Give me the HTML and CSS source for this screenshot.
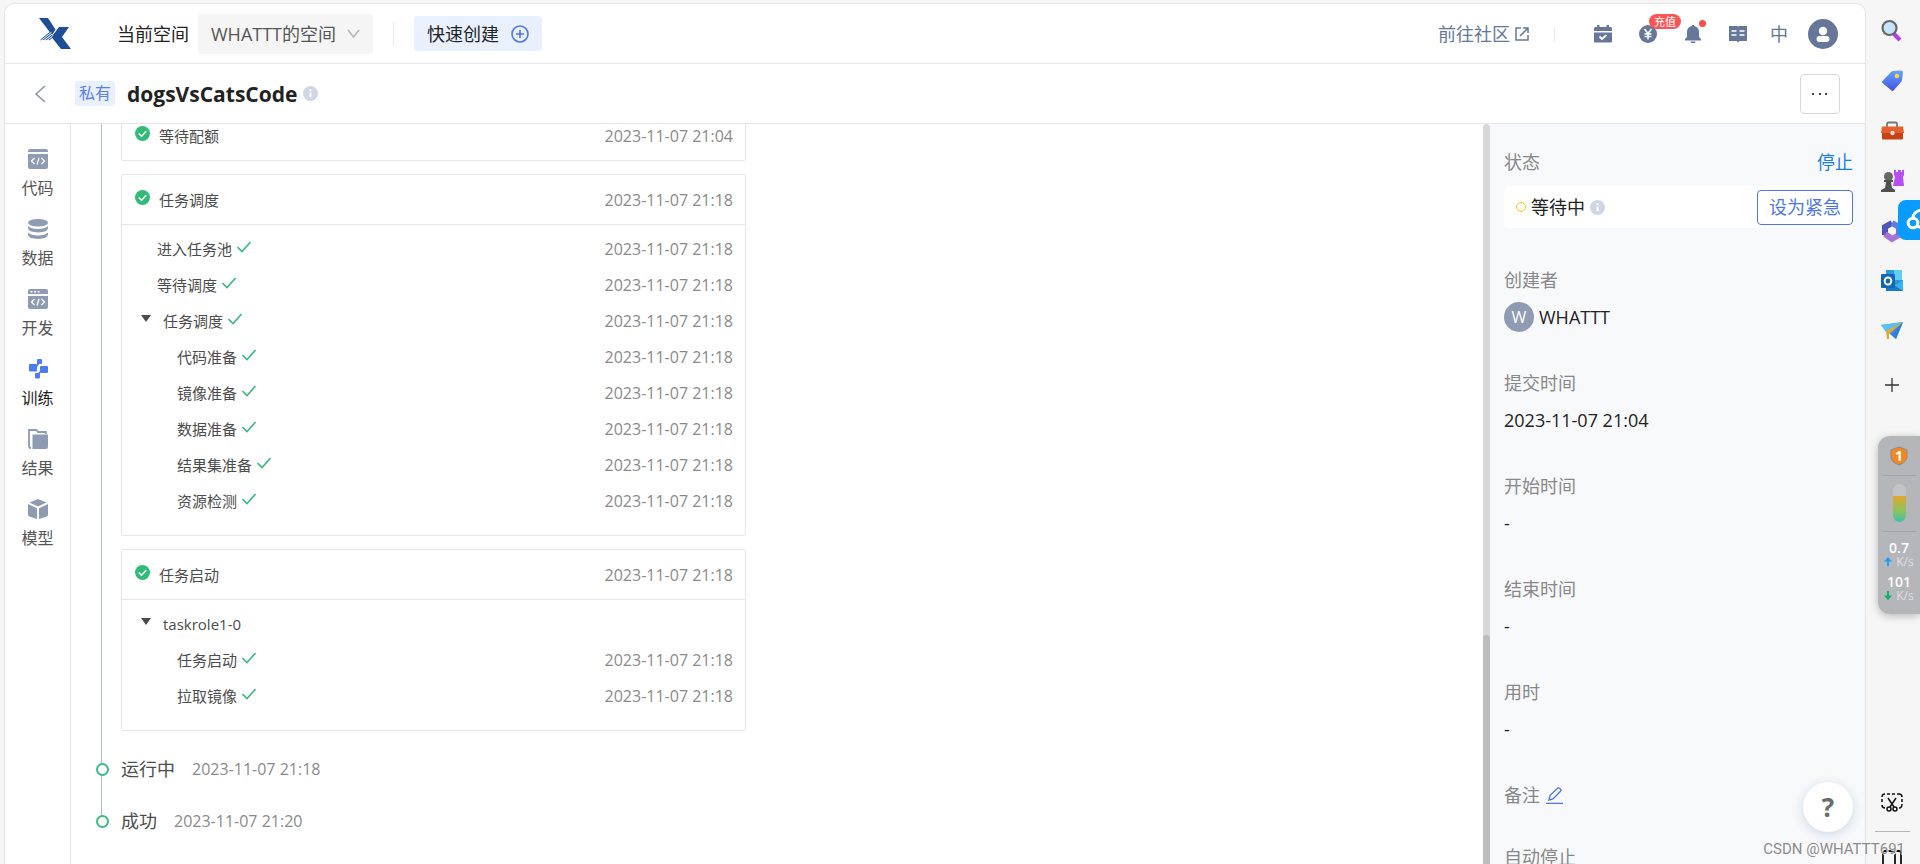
FILE: index.html
```html
<!DOCTYPE html>
<html lang="zh-CN">
<head>
    <meta charset="UTF-8">
    <meta name="viewport" content="width=device-width, initial-scale=1.0">
    <title>dogsVsCatsCode</title>
    <link rel="stylesheet" href="styles.css">
</head>
<body>
    <!-- shared icons -->
    <svg class="sprite" aria-hidden="true">
        <symbol id="i-info" viewBox="0 0 16 16">
            <circle cx="8" cy="8" r="8" fill="#d0d6e5"/>
            <path d="M7 3.5h2v2H7zM7 6.8h2V12H7z" fill="#fff"/>
        </symbol>
        <symbol id="i-done" viewBox="0 0 16 16">
            <circle cx="8" cy="8" r="8" fill="#30bb78"/>
            <path d="M4 8l3 3 5-5.5" fill="none" stroke="#fff" stroke-width="1.5"/>
        </symbol>
        <symbol id="i-check" viewBox="0 0 14 12">
            <path d="M0.500 6l4.500 4.500L13.500 1" fill="none" stroke="#3db983" stroke-width="1.600"/>
        </symbol>
        <symbol id="i-caret" viewBox="0 0 12 8">
            <path d="M1 0h10L6 7z" fill="#4c4c4c"/>
        </symbol>
    </svg>

    <div class="app">
        <header class="topbar">
            <a class="logo" href="#" aria-label="首页">
                <svg width="34" height="32" viewBox="0 0 34 32">
                    <path d="M1 0h9l7.500 11.500L14 17z" fill="#1f4e99"/>
                    <path d="M21 9h10l-7 10 9 12H23l-9.500-12z" fill="#1f4e99"/>
                    <path d="M13 13.500L3 22h9l3-4.500z" fill="#dbe5f3"/>
                    <path d="M2.500 22L13 13.500M5 22l9-7M8 22l6.500-5M11 22l4-3" stroke="#1f4e99" stroke-width="1"/>
                </svg>
            </a>
            <label class="space-label" for="space">当前空间</label>
            <div class="space-select">
                <select id="space"><option>WHATTT的空间</option></select>
                <svg width="13" height="10" viewBox="0 0 13 10"><path d="M1 1l5.500 7L12 1" fill="none" stroke="#b5b5b5" stroke-width="1.500"/></svg>
            </div>
            <span class="divider"></span>
            <button class="create">快速创建
                <svg width="18" height="18" viewBox="0 0 18 18" fill="none" stroke="#4e76e8" stroke-width="1.600"><circle cx="9" cy="9" r="8"/><path d="M9 5v8M5 9h8"/></svg>
            </button>

            <div class="tools">
                <a class="community" href="#">前往社区
                    <svg width="14" height="14" viewBox="0 0 14 14" fill="none" stroke="#66779a" stroke-width="1.500"><path d="M6 1H1v12h12V8M8 1h5v5M13 1L5 9"/></svg>
                </a>
                <span class="divider short"></span>
                <button class="tool" aria-label="日程">
                    <svg width="18" height="18" viewBox="0 0 18 18"><path d="M0 6V3.500Q0 2 1.500 2H3V0h2.500v2h7V0H15v2h1.500Q18 2 18 3.500V6zM0 7.500h18v9q0 1-1 1H1q-1 0-1-1z" fill="#66779a"/><path d="M5.500 11.500l2.500 2.500 4.500-4" fill="none" stroke="#fff" stroke-width="1.800"/></svg>
                </button>
                <button class="tool" aria-label="充值">
                    <svg width="18" height="18" viewBox="0 0 18 18"><circle cx="9" cy="9" r="9" fill="#66779a"/><path d="M5.500 4L9 8.500 12.500 4M9 8v6.500M5.500 9h7M5.500 11.500h7" fill="none" stroke="#fff" stroke-width="1.500"/></svg>
                    <span class="badge">充值</span>
                </button>
                <button class="tool" aria-label="通知">
                    <svg width="18" height="18" viewBox="0 0 18 18"><path d="M8 0h2v1q5 1 5 6v5l2 2v1.500H1V14l2-2V7q0-5 5-6zM6.500 16.500h5L11 18H7z" fill="#66779a"/></svg>
                    <span class="dot"></span>
                </button>
                <button class="tool" aria-label="文档">
                    <svg width="18" height="18" viewBox="0 0 18 18"><path d="M0 1h8q1 0 1 .800Q9 1 10 1h8v15h-7.500L9 17.500 7.500 16H0z" fill="#66779a"/><path d="M2.500 6h5M2.500 10h5M10.500 6h5M10.500 10h5" stroke="#fff" stroke-width="1.700"/></svg>
                </button>
                <button class="lang">中</button>
                <button class="avatar" aria-label="账户">
                    <svg width="30" height="30" viewBox="0 0 30 30"><circle cx="15" cy="15" r="15" fill="#66779a"/><circle cx="15" cy="12" r="4.200" fill="#fff"/><rect x="8.500" y="17" width="13" height="6" rx="3" fill="#fff"/></svg>
                </button>
            </div>
        </header>

        <div class="titlebar">
            <a class="back" href="#" aria-label="返回">
                <svg width="12" height="18" viewBox="0 0 12 18"><path d="M11 1L2 9l9 8" fill="none" stroke="#8f95a5" stroke-width="1.600"/></svg>
            </a>
            <span class="tag">私有</span>
            <h1>dogsVsCatsCode</h1>
            <svg width="15" height="15"><use href="#i-info"/></svg>
            <button class="more" aria-label="更多">
                <svg width="16" height="4" viewBox="0 0 16 4" fill="#444"><rect x="0" y="1" width="2" height="2"/><rect x="7" y="1" width="2" height="2"/><rect x="13" y="1" width="2" height="2"/></svg>
            </button>
        </div>

        <div class="body">
            <nav class="sidenav">
                <a href="#">
                    <svg width="20" height="20" viewBox="0 0 20 20"><path d="M0 3V2q0-2 2-2h16q2 0 2 2v1zM0 5h20v13q0 2-2 2H2q-2 0-2-2z" fill="#8f9ab3"/><path d="M6.500 9L3.500 12l3 3M13.500 9l3 3-3 3M11 9l-2 6.500" fill="none" stroke="#fff" stroke-width="1.300"/></svg>
                    代码
                </a>
                <a href="#">
                    <svg width="20" height="20" viewBox="0 0 20 20" fill="#8f9ab3"><ellipse cx="10" cy="3.800" rx="10" ry="3.800"/><path d="M0 7q3 3 10 3t10-3v2q0 4-10 4.500Q0 13 0 9zM0 13.500q3 3 10 3t10-3v2q0 4-10 4.500-10-.500-10-4.500z"/></svg>
                    数据
                </a>
                <a href="#">
                    <svg width="20" height="20" viewBox="0 0 20 20"><path d="M0 5V2q0-2 2-2h16q2 0 2 2v3zM0 7h20v11q0 2-2 2H2q-2 0-2-2z" fill="#8f9ab3"/><path d="M6.500 10L3.500 13l3 3M13.500 10l3 3-3 3M11 10l-2 6.500" fill="none" stroke="#fff" stroke-width="1.300"/><path d="M2.500 2.800h2M6 2.800h2M9.500 2.800h2" stroke="#fff" stroke-width="1.500"/></svg>
                    开发
                </a>
                <a class="active" href="#">
                    <svg width="20" height="20" viewBox="0 0 20 20" fill="#4b7bf5"><rect x="9" y="0" width="5" height="5" rx="1"/><rect x="1" y="5" width="8" height="7.500" rx="1"/><rect x="12" y="7" width="8" height="7" rx="1"/><rect x="7" y="14" width="5" height="5.500" rx="1"/><path d="M9 4h3l-3 4zM9 15h3l1-4z"/></svg>
                    训练
                </a>
                <a href="#">
                    <svg width="20" height="20" viewBox="0 0 20 20"><path d="M18 5V3h-8L8.500 1H1v16q0 2 2 2" fill="none" stroke="#8f9ab3" stroke-width="1.800"/><path d="M4.500 5.500H20V18q0 2-2 2H4.500z" fill="#8f9ab3"/></svg>
                    结果
                </a>
                <a href="#">
                    <svg width="20" height="20" viewBox="0 0 20 20" fill="#8f9ab3"><path d="M10 0l8.500 3.500L10 7.500 1.500 3.500zM0 5l9 4.200V20l-7.500-2.500Q0 17 0 15.500zM20 5l-9 4.200V20l7.500-2.500q1.500-.500 1.500-2z"/></svg>
                    模型
                </a>
            </nav>

            <main class="content">
                <ol class="timeline">
                    <li class="stage cards">
                        <section class="card">
                            <header class="card-head">
                                <svg class="done"><use href="#i-done"/></svg>等待配额<time>2023-11-07 21:04</time>
                            </header>
                        </section>
                        <section class="card">
                            <header class="card-head">
                                <svg class="done"><use href="#i-done"/></svg>任务调度<time>2023-11-07 21:18</time>
                            </header>
                            <ul class="rows">
                                <li>进入任务池<svg class="check"><use href="#i-check"/></svg><time>2023-11-07 21:18</time></li>
                                <li>等待调度<svg class="check"><use href="#i-check"/></svg><time>2023-11-07 21:18</time></li>
                                <li class="group"><svg class="caret"><use href="#i-caret"/></svg>任务调度<svg class="check"><use href="#i-check"/></svg><time>2023-11-07 21:18</time></li>
                                <li class="child">代码准备<svg class="check"><use href="#i-check"/></svg><time>2023-11-07 21:18</time></li>
                                <li class="child">镜像准备<svg class="check"><use href="#i-check"/></svg><time>2023-11-07 21:18</time></li>
                                <li class="child">数据准备<svg class="check"><use href="#i-check"/></svg><time>2023-11-07 21:18</time></li>
                                <li class="child">结果集准备<svg class="check"><use href="#i-check"/></svg><time>2023-11-07 21:18</time></li>
                                <li class="child">资源检测<svg class="check"><use href="#i-check"/></svg><time>2023-11-07 21:18</time></li>
                            </ul>
                        </section>
                        <section class="card">
                            <header class="card-head">
                                <svg class="done"><use href="#i-done"/></svg>任务启动<time>2023-11-07 21:18</time>
                            </header>
                            <ul class="rows">
                                <li class="group"><svg class="caret"><use href="#i-caret"/></svg>taskrole1-0</li>
                                <li class="child">任务启动<svg class="check"><use href="#i-check"/></svg><time>2023-11-07 21:18</time></li>
                                <li class="child">拉取镜像<svg class="check"><use href="#i-check"/></svg><time>2023-11-07 21:18</time></li>
                            </ul>
                        </section>
                    </li>
                    <li class="stage point">运行中<time>2023-11-07 21:18</time></li>
                    <li class="stage point">成功<time>2023-11-07 21:20</time></li>
                </ol>
            </main>

            <div class="scrollbar"><div class="thumb"></div></div>

            <aside class="panel">
                <section>
                    <h2>状态<a class="stop" href="#">停止</a></h2>
                    <div class="status">
                        <span class="ring"></span>等待中
                        <svg width="15" height="15"><use href="#i-info"/></svg>
                        <button class="urgent">设为紧急</button>
                    </div>
                </section>
                <section>
                    <h2>创建者</h2>
                    <p><span class="initial">W</span>WHATTT</p>
                </section>
                <section>
                    <h2>提交时间</h2>
                    <p>2023-11-07 21:04</p>
                </section>
                <section>
                    <h2>开始时间</h2>
                    <p>-</p>
                </section>
                <section>
                    <h2>结束时间</h2>
                    <p>-</p>
                </section>
                <section>
                    <h2>用时</h2>
                    <p>-</p>
                </section>
                <section class="note">
                    <h2>备注
                        <button class="edit" aria-label="编辑备注">
                            <svg width="17" height="17" viewBox="0 0 17 17" fill="none" stroke="#4e76e8" stroke-width="1.300"><path d="M0 16.300h17M3 13l1-4.500 7.500-7.300q1-.800 2 .100l1 1q1 1 0 2L7 12z"/></svg>
                        </button>
                    </h2>
                </section>
                <section>
                    <h2>自动停止</h2>
                </section>
            </aside>
        </div>
    </div>

    <div class="browser-bar">
        <button aria-label="搜索">
            <svg width="24" height="24" viewBox="0 0 24 24"><path d="M14 15l6 6" stroke="#b33be8" stroke-width="4"/><circle cx="9.500" cy="9" r="7" fill="#c3e5f7" stroke="#666" stroke-width="2.200"/></svg>
        </button>
        <button aria-label="购物">
            <svg width="24" height="24" viewBox="0 0 24 24"><defs><linearGradient id="tag" x1="0" y1="0" x2="0" y2="1"><stop offset="0" stop-color="#64a5f8"/><stop offset="1" stop-color="#4450e8"/></linearGradient></defs><path d="M13 2l8-.500q2 0 2 2L22 11q0 1-1 2l-7.500 8.500q-1 1-2 0L2.500 14q-1-1 0-2L11 3q1-1 2-1z" fill="url(#tag)"/><circle cx="17" cy="7" r="2.300" fill="#f8d552"/></svg>
        </button>
        <button aria-label="工具">
            <svg width="24" height="24" viewBox="0 0 24 24"><path d="M7 8V5q0-1.500 1.500-1.500h7Q17 3.500 17 5v3" fill="none" stroke="#777" stroke-width="1.800"/><rect x="2" y="12" width="21" height="8.500" rx="1" fill="#c84212"/><path d="M2 7.500h21L24 14H1z" fill="#e5602a"/><circle cx="12.500" cy="14" r="2.200" fill="#ddd"/></svg>
        </button>
        <button aria-label="游戏">
            <svg width="24" height="24" viewBox="0 0 24 24"><path d="M14 1h2v2h2V1h3v2h1V1h2v5l-1 2 1 9H13l2-9-1-2z" fill="#b84df2"/><circle cx="8.500" cy="7.500" r="4.500" fill="#686868"/><path d="M4 11h9v2h-2l1 6 3 2v2H1v-2l4-2 1-6H4z" fill="#505050"/></svg>
        </button>
        <button aria-label="Microsoft 365">
            <svg width="24" height="24" viewBox="0 0 24 24" fill="none" stroke-width="6"><path d="M12 4l-7 4v8" stroke="#4d55b8"/><path d="M5 15l7 5 7-4" stroke="#a973d8"/><path d="M19 16V8l-7-4" stroke="#5b7fe0"/></svg>
        </button>
        <button aria-label="Outlook">
            <svg width="24" height="24" viewBox="0 0 24 24"><path d="M6 1h16v20H6z" fill="#2a9be0"/><path d="M14 1h8v10h-8z" fill="#5fcdf5"/><path d="M6 12l8 3 9-4v11H6z" fill="#1679c4"/><path d="M14 16l9-5v11z" fill="#38b3ee"/><rect x="1" y="5" width="14" height="14" rx="1" fill="#1068b5"/><ellipse cx="8" cy="12" rx="3.300" ry="3.600" fill="none" stroke="#fff" stroke-width="2"/></svg>
        </button>
        <button aria-label="发送">
            <svg width="24" height="24" viewBox="0 0 24 24"><path d="M1 6l22-3-7 17-5-4z" fill="#3a9de8"/><path d="M1 6l22-3L6 13z" fill="#54c3f3"/><path d="M6 12l17-9L9 15v5H7z" fill="#e9a72e"/><path d="M11 15L23 3l-7 17z" fill="#2e7fe0"/></svg>
        </button>
        <button class="add" aria-label="添加">
            <svg width="16" height="16" viewBox="0 0 16 16"><path d="M1 8h14M8 1v14" stroke="#333" stroke-width="1.300"/></svg>
        </button>
        <div class="bar-bottom">
            <button aria-label="截图">
                <svg width="22" height="20" viewBox="0 0 22 20" fill="none" stroke="#111" stroke-width="1.500"><path d="M4 15Q1 15 1 12M1 9V6M1 4q0-3 3-3M6 1h3M11 1h3M16 1h2q3 0 3 3M21 6v3M21 11q0 4-3 4" /><path d="M7 5l6 9M15 5L9 14"/><circle cx="8" cy="16" r="2"/><circle cx="14" cy="16" r="2"/></svg>
            </button>
            <hr>
            <button aria-label="侧栏">
                <svg width="20" height="18" viewBox="0 0 20 18" fill="none" stroke="#111" stroke-width="1.800"><rect x="1" y="1" width="18" height="16" rx="2"/><path d="M13 1v16"/></svg>
            </button>
        </div>
    </div>

    <!-- floating widgets -->
    <button class="netdisk" aria-label="网盘">
        <svg width="22" height="40" viewBox="0 0 22 40" fill="none" stroke="#fff" stroke-width="3"><circle cx="15" cy="23" r="4.800"/><path d="M15 18q0-6 8-8M19 26l5 2"/></svg>
    </button>
    <div class="monitor">
        <svg width="18" height="20" viewBox="0 0 18 20"><path d="M9 1l8 3v7q0 5-8 8-8-3-8-8V4z" fill="#f5871f" stroke="#8d8791" stroke-width="1"/><text x="9" y="15" text-anchor="middle" class="shield-num">1</text></svg>
        <hr>
        <div class="gauge"></div>
        <hr>
        <div class="rate">
            <b>0.7</b>
            <span><svg width="8" height="9" viewBox="0 0 8 9"><path d="M4 0l4 4.500H5V9H3V4.500H0z" fill="#1fa2f2"/></svg>K/s</span>
        </div>
        <div class="rate">
            <b>101</b>
            <span><svg width="8" height="9" viewBox="0 0 8 9"><path d="M4 9L0 4.500h3V0h2v4.500h3z" fill="#12b05c"/></svg>K/s</span>
        </div>
    </div>
    <button class="help" aria-label="帮助">?</button>
    <div class="watermark">CSDN @WHATTT691</div>
</body>
</html>
```

FILE: styles.css
```css
*, *::before, *::after {
    box-sizing: border-box;
}
body {
    margin: 0;
    height: 100vh;
    display: flex;
    overflow: hidden;
    background: #f6f6f6;
    color: #222;
    font-family: "Open Sans", "Noto Sans CJK SC", sans-serif;
    font-size: 18px;
    line-height: 28px;
}
button, select {
    font: inherit;
    color: inherit;
    border: none;
    background: none;
    padding: 0;
    cursor: pointer;
}
a {
    color: inherit;
    text-decoration: none;
}
svg {
    display: block;
    flex: none;
}
ol, ul, h1, h2, p {
    margin: 0;
    padding: 0;
    list-style: none;
}
.sprite {
    position: absolute;
    width: 0;
    height: 0;
}

/* page window */
.app {
    flex: 1;
    min-width: 0;
    margin: 3px 0 0 4px;
    display: flex;
    flex-direction: column;
    background: #fff;
    border: 1px solid #e6e6e6;
    border-bottom: none;
    border-radius: 10px 10px 0 0;
    overflow: hidden;
}
.topbar {
    display: flex;
    align-items: center;
    height: 60px;
    flex: none;
    padding: 0 27px 0 33px;
    border-bottom: 1px solid #e4e6ea;
}
.space-label {
    margin-left: 45px;
}
.space-select {
    display: flex;
    align-items: center;
    height: 40px;
    margin-left: 9px;
    padding: 0 13px;
    border-radius: 4px;
    background: #f5f5f5;
    color: #555;
}
.space-select select {
    appearance: none;
    margin-right: 10px;
}
.divider {
    width: 1px;
    height: 24px;
    margin: 0 20px;
    background: #e9e9e9;
}
.create {
    display: flex;
    align-items: center;
    gap: 12px;
    height: 35px;
    padding: 0 13px;
    border-radius: 3px;
    background: #e9f0fe;
}
.tools {
    display: flex;
    align-items: center;
    margin-left: auto;
    color: #66779a;
}
.community {
    display: flex;
    align-items: center;
    gap: 5px;
}
.short {
    height: 16px;
    margin: 0 39px 0 25px;
}
.tool {
    position: relative;
    margin-right: 27px;
}
.badge {
    position: absolute;
    left: 10px;
    top: -11px;
    width: 32px;
    border-radius: 8px;
    background: #fb5454;
    color: #fff;
    font-size: 11px;
    line-height: 15px;
}
.dot {
    position: absolute;
    right: -4px;
    top: -5px;
    width: 7px;
    height: 7px;
    border-radius: 50%;
    background: #fb4b4b;
}
.lang {
    margin-right: 20px;
    margin-left: -4px;
}

.titlebar {
    display: flex;
    align-items: center;
    height: 60px;
    flex: none;
    padding: 0 25px 0 29px;
    border-bottom: 1px solid #e4e6ea;
}
.tag {
    margin-left: 29px;
    padding: 0 4px;
    border-radius: 3px;
    background: #e9f0fe;
    color: #5b7fe8;
    font-size: 16px;
    line-height: 25px;
}
.titlebar h1 {
    margin: 0 6px 0 12px;
    font-size: 21px;
}
.more {
    display: flex;
    align-items: center;
    justify-content: center;
    width: 40px;
    height: 40px;
    margin-left: auto;
    border: 1px solid #d9d9d9;
    border-radius: 4px;
}

.body {
    flex: 1;
    min-height: 0;
    display: flex;
}
.sidenav {
    flex: none;
    width: 66px;
    padding-top: 25px;
    border-right: 1px solid #e4e6ea;
    color: #555;
    font-size: 16px;
}
.sidenav a {
    display: flex;
    flex-direction: column;
    align-items: center;
    gap: 5px;
    height: 70px;
}
.sidenav .active {
    color: #222;
}

/* scrolled a little, the first card is cut by the title bar */
.content {
    flex: 1;
    min-width: 0;
    overflow: hidden;
}
.timeline {
    margin-top: -14px;
    padding-left: 30px;
}
.stage {
    position: relative;
    padding-left: 20px;
}
.stage::before {
    content: "";
    position: absolute;
    left: 0;
    top: 0;
    bottom: 0;
    width: 1px;
    background: #b3bacd;
}
.stage:last-child::before {
    bottom: 50%;
}
.cards {
    display: flex;
    flex-direction: column;
    gap: 13px;
    padding-bottom: 12px;
}
.card {
    max-width: 625px;
    border: 1px solid #e4e6ea;
    border-radius: 2px;
    color: #4c4c4c;
    font-size: 15px;
}
.card-head, .rows li {
    display: flex;
    align-items: center;
    padding-right: 12px;
}
.card-head {
    height: 49px;
    padding-left: 13px;
}
.rows {
    padding: 6px 0 16px;
    border-top: 1px solid #e4e6ea;
}
.rows li {
    height: 36px;
    padding-left: 35px;
}
.rows .group {
    padding-left: 18px;
}
.rows .child {
    padding-left: 55px;
}
time {
    margin-left: auto;
    color: #8a8a8a;
    font-size: 16px;
}
.done {
    width: 15px;
    height: 15px;
    margin: 0 9px 4px 0;
}
.check {
    width: 14px;
    height: 12px;
    margin: 0 0 4px 5px;
}
.caret {
    width: 12px;
    height: 8px;
    margin: 0 11px 4px 0;
}
.point {
    display: flex;
    align-items: center;
    height: 52px;
    color: #4c4c4c;
}
.point time {
    margin-left: 17px;
}
.point::after {
    content: "";
    position: absolute;
    left: -5px;
    top: 20px;
    width: 13px;
    height: 13px;
    border: 2px solid #3db983;
    border-radius: 50%;
    background: #fff;
}

.scrollbar {
    display: flex;
    align-items: flex-end;
    flex: none;
    width: 7px;
    border-radius: 4px;
    background: #d8d8d8;
}
.thumb {
    width: 100%;
    height: 31%;
    border-radius: 4px 4px 0 0;
    background: #bdbdbd;
}

/* details panel */
.panel {
    flex: none;
    width: 375px;
    padding: 24px 12px 0 14px;
    overflow: hidden;
    background: #f7f9fb;
}
.panel section {
    margin-bottom: 38px;
}
.panel .note {
    margin-bottom: 34px;
}
.panel h2 {
    display: flex;
    align-items: center;
    color: #888;
    font-size: 18px;
    font-weight: 400;
}
.panel p {
    display: flex;
    align-items: center;
    height: 28px;
    margin-top: 9px;
}
.stop {
    margin-left: auto;
    color: #1a7de0;
}
.status {
    display: flex;
    align-items: center;
    height: 42px;
    margin-top: 10px;
    padding-left: 12px;
    border-radius: 4px;
    background: #fff;
}
.ring {
    width: 10px;
    height: 10px;
    margin-right: 5px;
    border: 1px solid #f5c518;
    border-radius: 50%;
}
.status svg {
    margin-left: 5px;
}
.urgent {
    height: 35px;
    margin-left: auto;
    padding: 0 11px;
    border: 1px solid #4e76e8;
    border-radius: 4px;
    color: #4e76e8;
    line-height: 24px;
}
.initial {
    width: 30px;
    margin-right: 5px;
    border-radius: 50%;
    background: #8f9ab3;
    color: #fff;
    font-size: 16px;
    line-height: 30px;
    text-align: center;
}
.edit {
    margin-left: 6px;
}

/* browser side bar */
.browser-bar {
    flex: none;
    width: 54px;
    padding: 19px 2px 0 0;
    display: flex;
    flex-direction: column;
    align-items: center;
    gap: 26px;
}
.add {
    margin-top: 8px;
}
.bar-bottom {
    display: flex;
    flex-direction: column;
    align-items: center;
    gap: 18px;
    margin: auto 0 -4px;
}
.bar-bottom hr {
    width: 35px;
    margin: 0;
    border: none;
    border-top: 1px solid #b5b5b5;
}

.netdisk {
    position: absolute;
    right: 0;
    top: 200px;
    border-radius: 8px 0 0 8px;
    background: #0a9bff;
}
.monitor {
    position: absolute;
    right: 0;
    top: 436px;
    width: 42px;
    padding: 10px 0 6px;
    display: flex;
    flex-direction: column;
    align-items: center;
    border-radius: 12px 0 0 12px;
    background: #b4b6ba;
    box-shadow: 0 2px 8px rgba(0, 0, 0, 0.25);
    color: #fff;
}
.monitor hr {
    width: 34px;
    margin: 9px 0 8px;
    border: none;
    border-top: 1px solid #a3a5a9;
}
.shield-num {
    fill: #fff;
    font-size: 14px;
    font-weight: 700;
}
.gauge {
    width: 13px;
    height: 38px;
    border-radius: 7px;
    background: linear-gradient(#c2c3c5 32%, #e0a72e 32%, #8ec45a 70%, #3fbfae);
}
.rate {
    display: flex;
    flex-direction: column;
    align-items: center;
    height: 34px;
    font-size: 12px;
    line-height: 13px;
}
.rate b {
    font-size: 14px;
    font-weight: 600;
    line-height: 15px;
}
.rate span {
    display: flex;
    align-items: center;
    gap: 4px;
    color: #dedede;
}
.help {
    position: absolute;
    right: 67px;
    bottom: 32px;
    width: 50px;
    height: 50px;
    border-radius: 50%;
    background: #fff;
    box-shadow: 0 3px 12px rgba(60, 80, 140, 0.2);
    color: #6b6b6b;
    font-size: 26px;
    font-weight: 700;
}
.watermark {
    position: absolute;
    right: 15px;
    bottom: 5px;
    color: #8b8b8b;
    font-family: Roboto, sans-serif;
    font-size: 15px;
    line-height: 20px;
    text-shadow: 1px 1px 0 #fff;
}
```
